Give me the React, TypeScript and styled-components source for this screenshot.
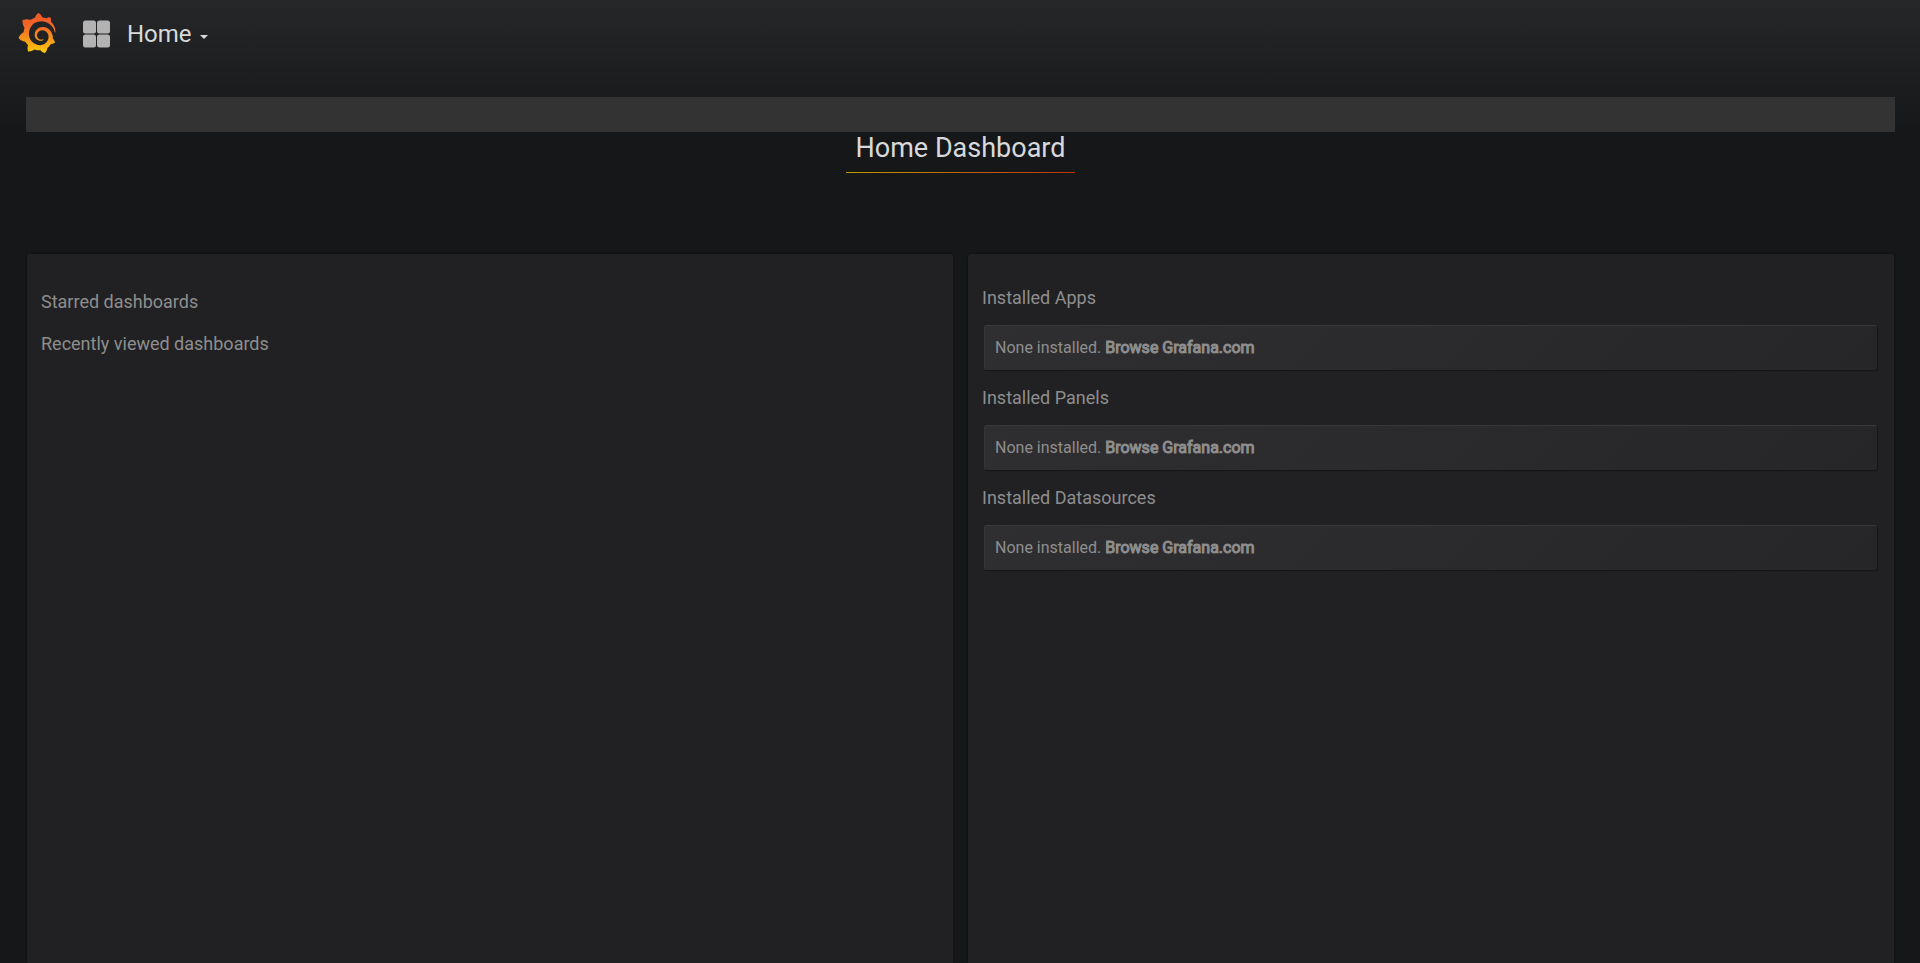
import React from "react";
import styled, { createGlobalStyle } from "styled-components";
import { SiGrafana } from "react-icons/si";

const GlobalStyle = createGlobalStyle`
  *, *::before, *::after {
    box-sizing: border-box;
  }

  body {
    margin: 0;
    background: #161719;
    color: #d8d9da;
    font-family: Roboto, "Liberation Sans", sans-serif;
    font-size: 16px;
  }
`;

const Page = styled.div`
  display: flex;
  flex-direction: column;
  min-height: 100vh;
  background: linear-gradient(180deg, #252728 0, #161719 132px);
`;

const Navbar = styled.nav`
  display: flex;
  align-items: center;
  height: 68px;
  margin-bottom: 29px;
  padding: 0 17px;
`;

const LogoLink = styled.a`
  display: flex;
  margin: 0 26px 2px 0;

  svg {
    width: 40px;
    height: 40px;
  }

  svg path {
    fill: url(#flame);
  }
`;

const DefsSvg = styled.svg`
  position: absolute;
  width: 0;
  height: 0;
`;

const DashboardPicker = styled.button`
  display: flex;
  align-items: center;
  padding: 0;
  border: 0;
  background: none;
  color: #d8d9da;
  font: 400 24px/32px Roboto, "Liberation Sans", sans-serif;
  cursor: pointer;
`;

const GridIcon = styled.svg`
  width: 28px;
  height: 28px;
  margin-right: 16px;
  fill: #b3b3b3;
`;

const Caret = styled.span`
  margin: 6px 0 0 8px;
  border: 4px solid transparent;
  border-top-color: #d8d9da;
  border-bottom: 0;
`;

const Main = styled.main`
  display: flex;
  flex: 1;
  flex-direction: column;
  padding: 0 25px 0 26px;
`;

const RowBar = styled.div`
  height: 35px;
  background: #333333;
`;

const Title = styled.h1`
  align-self: center;
  margin: 0 0 81px;
  padding: 0 10px 8px;
  border-bottom: 1px solid;
  border-image: linear-gradient(90deg, #c09c00, #bf3000) 1;
  font-size: 27px;
  font-weight: 400;
  line-height: 32px;
`;

const Panels = styled.div`
  display: grid;
  flex: 1;
  grid-template-columns: 1fr 1fr;
  gap: 15px;
  padding: 0 1px;
`;

const Panel = styled.section<{ $top: number }>`
  padding: ${(p) => p.$top}px 17px 0 14px;
  border-radius: 3px 3px 0 0;
  background: #212123;
  box-shadow: 0 0 2px #0e0e0f;
`;

const Heading = styled.h2<{ $gap: number }>`
  margin: 0 0 ${(p) => p.$gap}px;
  color: #8e8e8e;
  font-size: 18px;
  font-weight: 400;
  line-height: 24px;
`;

const PluginGroup = styled.div`
  margin-bottom: 16px;
`;

const Card = styled.p`
  margin: 0 0 0 2px;
  padding: 10px;
  border: 1px solid;
  border-color: #39393a transparent transparent #353536;
  border-radius: 2px;
  background: linear-gradient(135deg, #2f2f31, #262628) border-box;
  box-shadow: 1px 1px 1px #141414;
  color: #8e8e8e;
  line-height: 23px;
`;

const BrowseLink = styled.a`
  color: #8e8e8e;
  -webkit-text-stroke: 1px #8e8e8e;
  text-decoration: none;
`;

const pluginKinds = ["Apps", "Panels", "Datasources"];

export default function App() {
  return (
    <Page>
      <GlobalStyle />
      <DefsSvg aria-hidden="true">
        <linearGradient id="flame" x1="0" y1="0" x2="0" y2="1">
          <stop offset="0.1" stopColor="#f05a28" />
          <stop offset="0.35" stopColor="#f26a27" />
          <stop offset="1" stopColor="#fbca0a" />
        </linearGradient>
      </DefsSvg>
      <Navbar>
        <LogoLink href="#" aria-label="Grafana">
          <SiGrafana />
        </LogoLink>
        <DashboardPicker type="button">
          <GridIcon viewBox="0 0 28 28" aria-hidden="true">
            <rect x="0" y="0.5" width="13" height="13" rx="2.5" />
            <rect x="14" y="0.5" width="13" height="13" rx="2.5" />
            <rect x="0" y="14.5" width="13" height="13" rx="2.5" />
            <rect x="14" y="14.5" width="13" height="13" rx="2.5" />
          </GridIcon>
          Home
          <Caret />
        </DashboardPicker>
      </Navbar>
      <Main>
        <RowBar />
        <Title>Home Dashboard</Title>
        <Panels>
          <Panel $top={36}>
            <Heading $gap={18}>Starred dashboards</Heading>
            <Heading $gap={18}>Recently viewed dashboards</Heading>
          </Panel>
          <Panel $top={32}>
            {pluginKinds.map((kind) => (
              <PluginGroup key={kind}>
                <Heading $gap={15}>Installed {kind}</Heading>
                <Card>
                  None installed. <BrowseLink href="#">Browse Grafana.com</BrowseLink>
                </Card>
              </PluginGroup>
            ))}
          </Panel>
        </Panels>
      </Main>
    </Page>
  );
}
